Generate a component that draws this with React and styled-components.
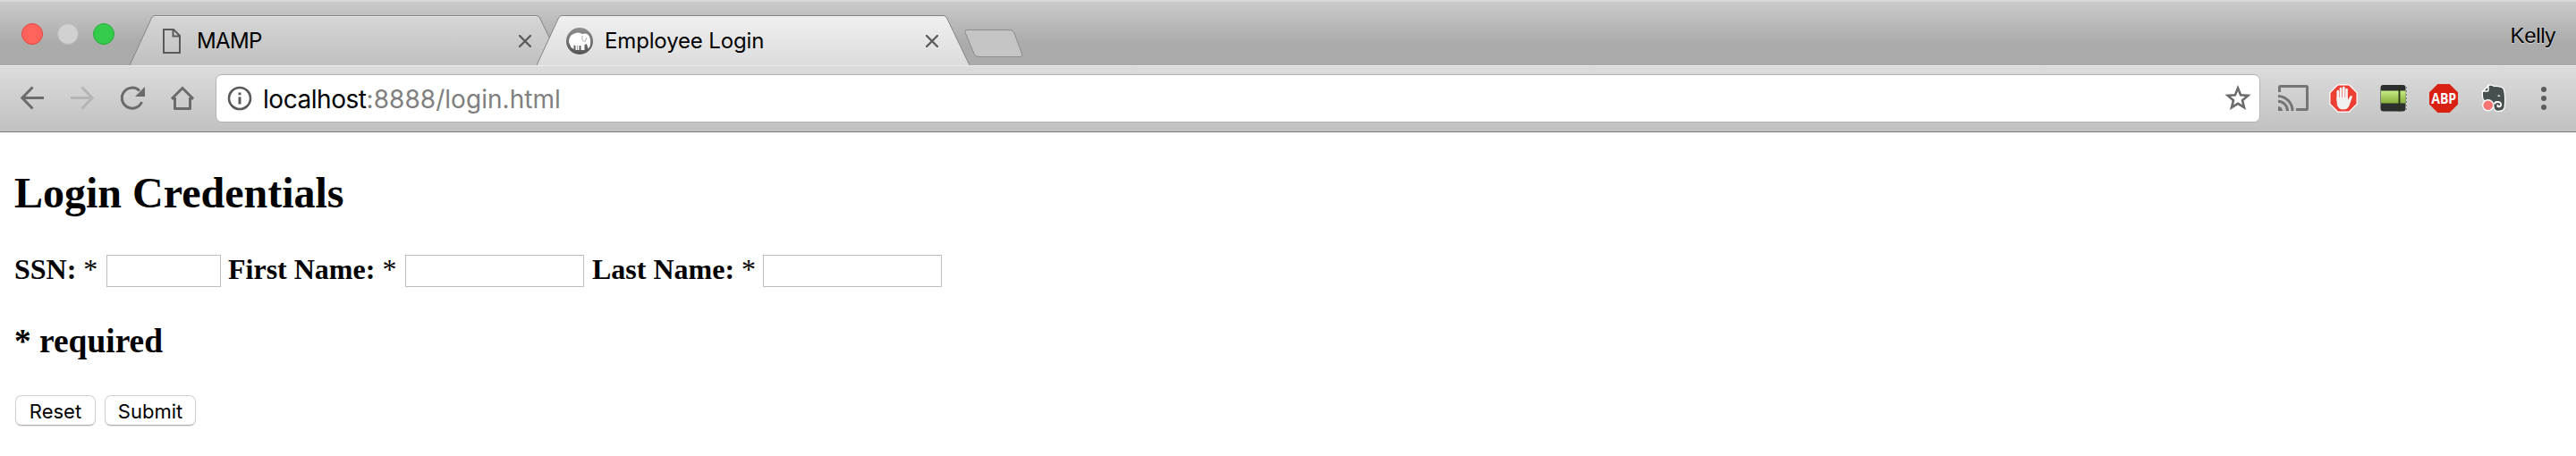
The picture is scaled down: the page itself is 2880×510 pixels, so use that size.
import React from "react";
import styled, { createGlobalStyle } from "styled-components";

const GlobalStyle = createGlobalStyle`
  * { box-sizing: border-box; }
  body { margin: 0; background: #fff; overflow: hidden; }
`;

const uiFont = `Inter, Roboto, sans-serif`;

const Window = styled.div`
  width: 2880px;
  height: 510px;
  background: #fff;
  color: #000;
`;

const TitleBar = styled.header`
  display: flex;
  height: 73px;
  border-top: 2px solid #d9d9d9;
  background: linear-gradient(#cacaca, #ababab 65%, #ababab);
`;

const TrafficLights = styled.div`
  display: flex;
  gap: 16px;
  width: 145px;
  padding: 24px 0 0 24px;
`;

const Light = styled.span`
  width: 24px;
  height: 24px;
  border-radius: 50%;
  border: 1px solid ${(p) => p.$edge};
  background: ${(p) => p.$fill};
`;

const TabShell = styled.div`
  display: grid;
  width: 484px;
  height: 58px;
  margin: 14px 0 0 ${(p) => (p.$overlap ? "-29px" : "0")};
  z-index: ${(p) => (p.$overlap ? 1 : 0)};
  flex: none;
  > * { grid-area: 1 / 1; }
`;

const TabContent = styled.div`
  display: flex;
  align-items: center;
  height: 58px;
  padding: 1px 35px 0 ${(p) => p.$start}px;
`;

const TabTitle = styled.span`
  flex: 1;
  font: 24px/30px ${uiFont};
  letter-spacing: ${(p) => p.$tracking}px;
  margin-left: ${(p) => p.$gap}px;
  white-space: nowrap;
`;

const NewTab = styled.svg`
  margin: 30px 0 0 -8px;
  flex: none;
`;

const Profile = styled.span`
  margin: 24px 23px 0 auto;
  font: 24px/27px "Liberation Sans", Arial, sans-serif;
  letter-spacing: -0.3px;
  text-shadow: 0 1px 1px #ddd;
`;

const Toolbar = styled.nav`
  display: flex;
  height: 75px;
  padding: 0 18px;
  border-top: 1px solid #eaeaea;
  border-bottom: 1px solid #777;
  background: linear-gradient(#dcdcdc, #c1c1c1);
`;

const IconRow = styled.div`
  display: flex;
  gap: 20px;
  padding-top: 18px;
`;

const Icon = styled.svg`
  display: block;
  width: 36px;
  height: 36px;
  overflow: visible;
  flex: none;
`;

const AddressBar = styled.div`
  display: flex;
  align-items: center;
  width: 2286px;
  height: 54px;
  margin: 9px 19px 0 19px;
  padding: 0 6px 0 8px;
  border: 1px solid #b3b3b3;
  border-radius: 7px;
  background: #fff;
`;

const Url = styled.span`
  flex: 1;
  margin-left: 8px;
  padding-top: 2px;
  font: 28px/34px ${uiFont};
  letter-spacing: -0.45px;
  span {
    color: #808080;
    letter-spacing: 0.04px;
  }
`;

const Page = styled.main`
  padding: 0 16px;
  font-family: "Liberation Serif", "Times New Roman", serif;
`;

const Heading = styled.h2`
  margin: 0;
  padding-top: 40px;
  font-size: 48px;
  line-height: 55px;
`;

const Fields = styled.div`
  display: flex;
  align-items: flex-start;
  height: 36px;
  margin-top: 42px;
  font-size: 32px;
`;

const Label = styled.label`
  width: ${(p) => p.$width}px;
  padding-left: ${(p) => p.$pad || 0}px;
  line-height: 32px;
  white-space: nowrap;
`;

const Input = styled.input`
  width: ${(p) => p.$width}px;
  height: 36px;
  padding: 0 4px;
  border: 1px solid #bdbdbd;
  border-radius: 0;
  background: #fff;
  font: 22px ${uiFont};
`;

const Note = styled.h3`
  margin: 0;
  padding-top: 40px;
  font-size: 37.44px;
  line-height: 41px;
`;

const Buttons = styled.div`
  display: flex;
  gap: 10px;
  margin: 40px 0 0 1px;
`;

const Button = styled.button`
  width: ${(p) => p.$width}px;
  height: 34px;
  padding: 2px 0 0;
  border: 1px solid #d0d0d0;
  border-bottom-color: #b5b5b5;
  border-radius: 7px;
  background: #fff;
  box-shadow: 0 1px 1px rgba(0, 0, 0, 0.12);
  font: 22px/30px ${uiFont};
  color: #000;
`;

const CloseIcon = () => (
  <svg width="14" height="14" viewBox="0 0 14 14">
    <path d="M1 1 13 13M13 1 1 13" stroke="#5c5c5c" strokeWidth="2.4" strokeLinecap="round" />
  </svg>
);

const TabShape = ({ id, from, to }) => (
  <svg width="484" height="58" viewBox="0 0 484 58">
    <defs>
      <linearGradient id={id} x1="0" y1="0" x2="0" y2="1">
        <stop offset="0" stopColor={from} />
        <stop offset="1" stopColor={to} />
      </linearGradient>
    </defs>
    <path d="M0 57 24.5 4Q26 1.5 28 1.5H455Q457 1.5 458.500 4L484 57Z" fill={`url(#${id})`} />
    <path d="M0 57 24.500 4Q26 1.500 28 1.500H455Q457 1.500 458.500 4L484 57" fill="none" stroke="#858585" />
    <path d="M28 2.500H455" stroke="#f0f0f0" strokeOpacity=".7" />
  </svg>
);

const FileIcon = () => (
  <svg width="20" height="28" viewBox="0 0 20 28">
    <path d="M1 1H12L19 8V27H1ZM11.500 1V8.500H19" fill="none" stroke="#5a5a5a" strokeWidth="2" />
  </svg>
);

const ElephantIcon = () => (
  <svg width="30" height="32" viewBox="0 0 30 32">
    <defs>
      <linearGradient id="coin" x1="0" y1="0" x2="0" y2="1">
        <stop offset="0" stopColor="#8f8f8f" />
        <stop offset="1" stopColor="#555" />
      </linearGradient>
    </defs>
    <circle cx="15" cy="16" r="15" fill="url(#coin)" />
    <path d="M3 17Q3 10 8 8Q13 5 18 8Q24 6 26 11Q28 16 26.500 22L24.500 24.500 23 19 20.500 20V26H16.500V21H14.500V26H10.500V21L8.500 20.500V25L5.500 23Z" fill="#fff" />
    <path d="M18 10Q17 16 21 16.500L23 12M12.500 21V26" stroke="#aaa" fill="none" />
  </svg>
);

const octagon = (r) => {
  const k = r * 0.4142;
  return [[-k, -r], [k, -r], [r, -k], [r, k], [k, r], [-k, r], [-r, k], [-r, -k]]
    .map(([x, y]) => `${18 + x},${18 + y}`)
    .join(" ");
};

const AbpLabel = styled.text`
  font: bold 16.5px "Open Sans", "Noto Sans", sans-serif;
  fill: #fff;
`;

const NavIcons = () => (
  <IconRow>
    <Icon viewBox="0 0 36 36" fill="none" stroke="#6b6b6b" strokeWidth="3">
      <path d="M31 17.500H7M18.500 5.500 6.800 17.500 18.500 29.500" />
    </Icon>
    <Icon viewBox="0 0 36 36" fill="none" stroke="#b5b5b5" strokeWidth="3">
      <path d="M5 17.500H29M17.500 5.500 29.200 17.500 17.500 29.500" />
    </Icon>
    <Icon viewBox="0 0 36 36" fill="none" stroke="#6b6b6b" strokeWidth="3">
      <path d="M28.500 22A11.500 11.500 0 1 1 26 9.500" />
      <path d="M32 5V16H21Z" fill="#6b6b6b" stroke="none" />
    </Icon>
    <Icon viewBox="0 0 36 36" fill="none" stroke="#6b6b6b" strokeWidth="3" strokeLinejoin="round">
      <path d="M9.500 17V29.500H26.500V17" />
      <path d="M6 18.500 18 6.500 30 18.500" strokeLinejoin="miter" />
      <path d="M6 18.500H10M26 18.500H30" strokeWidth="2" />
    </Icon>
  </IconRow>
);

const ExtensionIcons = () => (
  <IconRow>
    <Icon viewBox="0 0 36 36" fill="none" stroke="#757575" strokeWidth="3">
      <path d="M2.500 11V5.500Q2.500 4.500 3.500 4.500H32.500Q33.500 4.500 33.500 5.500V29.500Q33.500 30.500 32.500 30.500H21" />
      <path d="M1 15.500A16.500 16.500 0 0 1 17 32M1 21.200A10.800 10.800 0 0 1 11.500 32" />
      <path d="M1 27A5 5 0 0 1 6 32H1Z" fill="#757575" stroke="none" />
    </Icon>
    <Icon viewBox="0 0 36 36">
      <polygon points={octagon(15.7)} fill="#fff" />
      <polygon points={octagon(14.5)} fill="#ed3e34" />
      <g stroke="#f4f4f4" strokeWidth="2.700" strokeLinecap="round">
        <path d="M11.800 10V20M15 7V20M18.300 6V20M21.500 8V20" />
      </g>
      <path d="M10.400 17H22.800V20L25.500 15.500Q27.500 14.200 28 16L24.500 26Q22.500 30.500 18 30.500Q12 30.500 10.900 25Z" fill="#f1f1f1" />
    </Icon>
    <Icon viewBox="0 0 36 36">
      <defs>
        <linearGradient id="lime" x1="0" y1="0" x2="0" y2="1">
          <stop offset="0" stopColor="#c9ec86" />
          <stop offset="1" stopColor="#86ad39" />
        </linearGradient>
      </defs>
      <rect x="5" y="4" width="28.500" height="28" rx="2" fill="#d6d6d6" />
      <rect x="3.500" y="3" width="28" height="29.500" rx="3" fill="#2b302f" />
      <rect x="4" y="9.500" width="27.500" height="14" fill="url(#lime)" />
      <path d="M24.500 3V32.500" stroke="#293017" strokeWidth="1.800" />
      <path d="M32.500 5V31" stroke="#888" strokeDasharray="2 2" />
    </Icon>
    <Icon viewBox="0 0 36 36">
      <polygon points={octagon(16)} fill="#d92113" />
      <AbpLabel x="4.200" y="24" textLength="28" lengthAdjust="spacingAndGlyphs">ABP</AbpLabel>
    </Icon>
    <Icon viewBox="0 0 36 36">
      <path
        d="M12 4Q16 3 18 5Q25 4.500 28.500 7.500Q31 15 29.500 28Q28 32.500 21 31.500Q18 30 18.500 26L12 22Q6 21 6 15V11Q6 10 7 10H11Q12 10 12 9Z"
        fill="#45504f" stroke="#fff" strokeWidth="2.400" strokeLinejoin="round" paintOrder="stroke"
      />
      <path d="M6 10 12 4V9Q12 10 11 10Z" fill="#45504f" stroke="#fff" strokeWidth="1.500" />
      <path d="M22 15.500Q24 13 25.500 16Z" fill="#fff" />
      <path d="M19 24.500Q19 22 22 22Q26.500 22 26 25.500Q25.500 28 22.500 27V25" fill="none" stroke="#fff" strokeWidth="1.900" />
      <circle cx="11.700" cy="25.700" r="6" fill="#fb7474" stroke="#fff" strokeWidth="1.400" />
    </Icon>
    <Icon viewBox="0 0 36 36" fill="#5c5c5c">
      <circle cx="18" cy="8" r="3" />
      <circle cx="18" cy="18" r="3" />
      <circle cx="18" cy="28" r="3" />
    </Icon>
  </IconRow>
);

export default function App() {
  return (
    <Window>
      <GlobalStyle />
      <TitleBar>
        <TrafficLights>
          <Light $fill="#ff635c" $edge="#e2443f" />
          <Light $fill="#d1d1d1" $edge="#b9b9b9" />
          <Light $fill="#35cb4b" $edge="#25ad36" />
        </TrafficLights>
        <TabShell>
          <TabShape id="idle" from="#d6d6d6" to="#c0c0c0" />
          <TabContent $start={37}>
            <FileIcon />
            <TabTitle $gap={18} $tracking={-0.6}>MAMP</TabTitle>
            <CloseIcon />
          </TabContent>
        </TabShell>
        <TabShell $overlap>
          <TabShape id="active" from="#f0f0f0" to="#dcdcdc" />
          <TabContent $start={33}>
            <ElephantIcon />
            <TabTitle $gap={13} $tracking={-0.15}>Employee Login</TabTitle>
            <CloseIcon />
          </TabContent>
        </TabShell>
        <NewTab width="70" height="36" viewBox="0 0 70 36">
          <path d="M5 1.500H53Q56 1.500 57.500 4L66.500 28Q67.500 31.500 65 31.500H18Q14.500 31.500 13 28L3 4Q2 1.500 5 1.500Z" fill="#c5c5c5" stroke="#8c8c8c" />
        </NewTab>
        <Profile>Kelly</Profile>
      </TitleBar>
      <Toolbar>
        <NavIcons />
        <AddressBar>
          <Icon viewBox="0 0 36 36">
            <circle cx="18" cy="18" r="12" fill="none" stroke="#5a5a5a" strokeWidth="2.600" />
            <path d="M18 16.500V24.500M18 11.500V14.200" stroke="#5a5a5a" strokeWidth="3" />
          </Icon>
          <Url>localhost<span>:8888/login.html</span></Url>
          <Icon viewBox="0 0 36 36">
            <path d="M18 6.500 21.100 14.300 29.300 14.900 23 20.200 25 28.200 18 23.800 11 28.200 13 20.200 6.700 14.900 14.900 14.300Z" fill="none" stroke="#6b6b6b" strokeWidth="2.600" />
          </Icon>
        </AddressBar>
        <ExtensionIcons />
      </Toolbar>
      <Page>
        <Heading>Login Credentials</Heading>
        <Fields>
          <Label $width={103}><b>SSN:</b> *</Label>
          <Input $width={128} />
          <Label $width={206} $pad={8}><b>First Name:</b> *</Label>
          <Input $width={200} />
          <Label $width={200} $pad={9}><b>Last Name:</b> *</Label>
          <Input $width={200} />
        </Fields>
        <Note>* required</Note>
        <Buttons>
          <Button $width={90}>Reset</Button>
          <Button $width={102}>Submit</Button>
        </Buttons>
      </Page>
    </Window>
  );
}
